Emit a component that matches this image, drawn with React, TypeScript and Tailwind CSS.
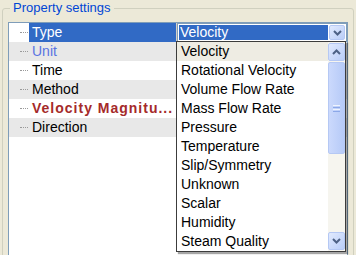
const rows = [
  { name: 'Type', kind: 'selected' },
  { name: 'Unit', kind: 'disabled' },
  { name: 'Time', kind: 'normal' },
  { name: 'Method', kind: 'normal' },
  { name: 'Velocity Magnitu...', kind: 'bold' },
  { name: 'Direction', kind: 'normal' },
]

const options = [
  'Velocity',
  'Rotational Velocity',
  'Volume Flow Rate',
  'Mass Flow Rate',
  'Pressure',
  'Temperature',
  'Slip/Symmetry',
  'Unknown',
  'Scalar',
  'Humidity',
  'Steam Quality',
]

function Chevron({ up }: { up?: boolean }) {
  return (
    <svg width="9" height="6" viewBox="0 0 9 6">
      <path
        d={up ? 'M1 5L4.5 1.5L8 5' : 'M1 1L4.5 4.5L8 1'}
        fill="none"
        stroke="#4D6185"
        strokeWidth={2}
      />
    </svg>
  )
}

function XpButton({ up, className }: { up?: boolean; className?: string }) {
  return (
    <div
      className={
        'flex items-center justify-center rounded-[2px] border border-[#B5C8F4] bg-gradient-to-br from-[#E1EAFE] to-[#B9CDF8] ' +
        (className ?? '')
      }
    >
      <Chevron up={up} />
    </div>
  )
}

export default function App() {
  return (
    <div className="relative h-[255px] w-[356px] overflow-hidden bg-[#ECE9D8] px-[2px] pt-[8px] font-['Liberation_Sans',Arial,sans-serif]">
      <div className="relative h-[260px] rounded-[3px] border border-[#D0D0BF]">
        <span className="absolute left-[7px] top-[-9px] bg-[#ECE9D8] px-[3px] text-[13px] leading-[16px] text-[#0046D5]">
          Property settings
        </span>

        <div className="ml-[5px] mr-[5px] mt-[13px] h-[250px] border border-[#7F9DB9] bg-white">
          <div className="relative">
            {/* tree lines */}
            <div className="absolute left-[11px] top-0 h-[105px] border-l border-dotted border-[#9A9A9A]" />
            {rows.map((r, i) => (
              <div
                key={r.name}
                className={
                  'relative flex h-[19px] text-[14px] leading-[19px] ' +
                  (i % 2 === 1 ? 'bg-[#E8E8E8]' : 'bg-white')
                }
              >
                <div className="relative w-[20px] shrink-0">
                  <div className="absolute left-[11px] top-[9px] w-[8px] border-t border-dotted border-[#9A9A9A]" />
                </div>
                <div
                  className={
                    'w-[147px] shrink-0 overflow-hidden whitespace-nowrap pl-[3px] ' +
                    (r.kind === 'selected'
                      ? 'bg-[#316AC5] text-white'
                      : r.kind === 'disabled'
                        ? 'text-[#5A74E2]'
                        : r.kind === 'bold'
                          ? 'font-bold tracking-[1px] text-[#A52A2A]'
                          : 'text-black')
                  }
                >
                  {r.name}
                </div>
                <div className="w-px shrink-0 bg-[#D4D0C8]" />
                {r.kind === 'selected' ? (
                  <div className="flex flex-1 border border-[#7F9DB9] bg-white p-px">
                    <div className="flex-1 bg-[#316AC5] pl-[1px] text-[14px] leading-[15px] text-white">
                      Velocity
                    </div>
                    <XpButton className="ml-px w-[16px]" />
                  </div>
                ) : (
                  <div className="flex-1" />
                )}
              </div>
            ))}
          </div>
        </div>
      </div>

      {/* open dropdown list */}
      <div className="absolute left-[176px] top-[41px] flex w-[170px] border border-[#3C3C3C] bg-white shadow-[2px_2px_1px_rgba(0,0,0,0.35)]">
        <div className="flex-1">
          {options.map((o, i) => (
            <div
              key={o}
              className={
                'h-[19px] whitespace-nowrap pl-[4px] text-[14px] leading-[19px] text-black ' +
                (i === 0 ? 'bg-[#EEECE3]' : '')
              }
            >
              {o}
            </div>
          ))}
        </div>
        <div className="flex w-[17px] flex-col bg-[#F6F5EF] py-px">
          <XpButton up className="h-[18px]" />
          <div className="flex-1">
            <div className="mt-px flex h-[92px] items-center justify-center rounded-[2px] border border-[#B5C8F4] bg-gradient-to-r from-[#CBD9FC] to-[#B6CAF7]">
              <div className="flex flex-col gap-[1px]">
                <div className="h-px w-[7px] bg-[#EEF3FE]" />
                <div className="h-px w-[7px] bg-[#8CA8E8]" />
                <div className="h-px w-[7px] bg-[#EEF3FE]" />
                <div className="h-px w-[7px] bg-[#8CA8E8]" />
              </div>
            </div>
          </div>
          <XpButton className="h-[18px]" />
        </div>
      </div>
    </div>
  )
}
